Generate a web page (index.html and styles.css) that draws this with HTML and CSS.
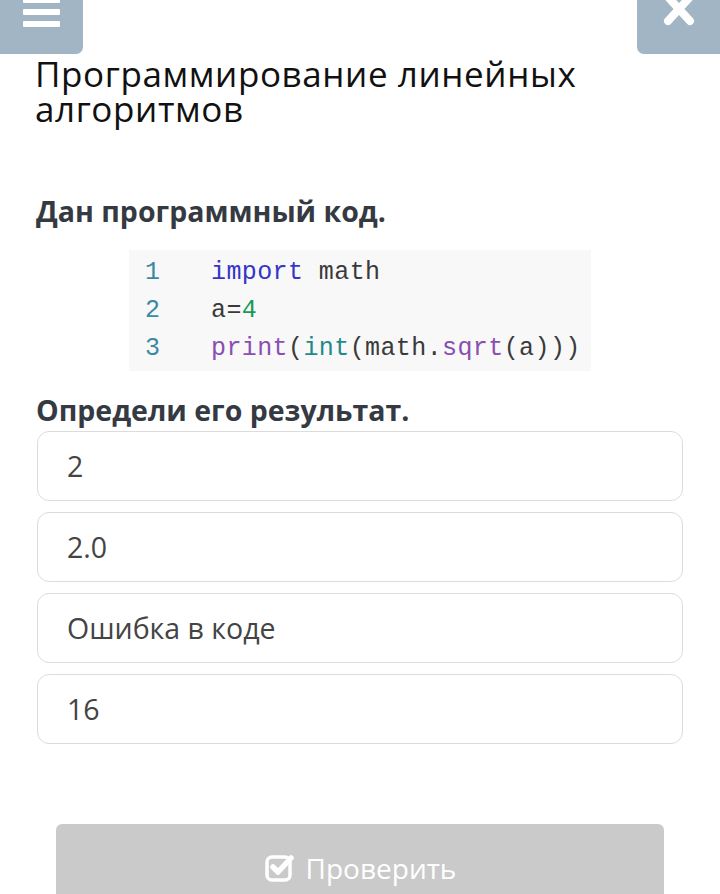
FILE: index.html
```html
<!DOCTYPE html>
<html lang="ru">
<head>
    <meta charset="UTF-8">
    <meta name="viewport" content="width=device-width, initial-scale=1.0">
    <title>Программирование линейных алгоритмов</title>
    <link rel="stylesheet" href="styles.css">
</head>
<body>
    <div class="topbar">
        <button class="corner-btn menu-btn" aria-label="Меню">
            <span></span><span></span><span></span>
        </button>
        <button class="corner-btn close-btn" aria-label="Закрыть">
            <svg width="32" height="30" viewBox="0 0 32 30">
                <path d="M5 -3 L27 21 M27 -3 L5 21" stroke="#fff" stroke-width="8" stroke-linecap="round"/>
            </svg>
        </button>
    </div>

    <main class="task">
        <h1 class="task-title">Программирование линейных алгоритмов</h1>

        <p class="question">Дан программный код.</p>

        <div class="code-wrap">
            <pre class="code"><span class="ln">1</span><span class="kw">import</span> math
<span class="ln">2</span>a=<span class="num">4</span>
<span class="ln">3</span><span class="fn">print</span>(<span class="bi">int</span>(math.<span class="fn">sqrt</span>(a)))</pre>
        </div>

        <p class="question">Определи его результат.</p>

        <div class="options">
            <div class="option">2</div>
            <div class="option">2.0</div>
            <div class="option">Ошибка в коде</div>
            <div class="option">16</div>
        </div>

        <button class="check-btn">
            <svg width="32" height="32" viewBox="0 0 32 32">
                <rect x="3" y="5" width="23" height="23" rx="5" fill="none" stroke="#fff" stroke-width="3.5"/>
                <path d="M9 15 L14 20 L27 6" fill="none" stroke="#fff" stroke-width="5.5" stroke-linecap="round" stroke-linejoin="round"/>
            </svg>
            Проверить
        </button>
    </main>
</body>
</html>
```

FILE: styles.css
```css
body {
    margin: 0;
    font-family: "Open Sans", "Noto Sans", sans-serif;
    background: #fff;
    color: #333;
    overflow: hidden;
}
.topbar {
    display: flex;
    justify-content: space-between;
    height: 54px;
}
.corner-btn {
    width: 83px;
    height: 54px;
    border: none;
    padding: 0;
    background: #a2b5c4;
    cursor: pointer;
}
.menu-btn {
    border-bottom-right-radius: 7px;
    display: flex;
    flex-direction: column;
    align-items: flex-start;
    gap: 6px;
    padding-left: 23px;
    margin-top: -3px;
    height: 57px;
}
.menu-btn span {
    display: block;
    width: 37px;
    height: 6px;
    background: #fff;
    border-radius: 1px;
}
.close-btn {
    border-bottom-left-radius: 7px;
    display: flex;
    justify-content: center;
    align-items: flex-start;
}
.task {
    padding: 0 37px;
}
.task-title {
    margin: 2px 0 0 -2px;
    font-size: 35px;
    font-weight: 400;
    line-height: 35px;
    color: #111;
    letter-spacing: 0.6px;
}
.question {
    margin: 0 0 0 -1px;
    font-size: 28.5px;
    line-height: 36px;
    font-weight: 700;
    color: #353a42;
}
.task-title + .question {
    margin-top: 67px;
}
.code-wrap {
    margin: 21px 0 0 92px;
    width: 462px;
    background: #f8f8f8;
    padding: 4px 0 3px;
}
.code {
    margin: 0;
    font-family: "Liberation Mono", "DejaVu Sans Mono", monospace;
    font-size: 25px;
    line-height: 38px;
    color: #3a3a3a;
    letter-spacing: 0.4px;
}
.ln {
    display: inline-block;
    width: 82px;
    padding-left: 16px;
    box-sizing: border-box;
    color: #3b8aa0;
    letter-spacing: 0;
}
.kw { color: #3535c8; }
.num { color: #1a9a5a; }
.fn { color: #8a4fb0; }
.bi { color: #1e8a8a; }
.code-wrap + .question {
    margin-top: 21px;
}
.options {
    margin-top: 3px;
    display: flex;
    flex-direction: column;
    gap: 11px;
}
.option {
    height: 70px;
    box-sizing: border-box;
    border: 1.5px solid #dcdcdc;
    border-radius: 12px;
    padding-left: 29px;
    display: flex;
    align-items: center;
    font-size: 28.5px;
    color: #444;
}
.check-btn {
    display: flex;
    justify-content: center;
    align-items: center;
    gap: 10px;
    width: 608px;
    height: 80px;
    margin: 80px 0 0 19px;
    padding-top: 8px;
    border: none;
    border-radius: 6px 6px 0 0;
    background: #cacaca;
    color: #fff;
    font-family: inherit;
    font-size: 28px;
}
```
